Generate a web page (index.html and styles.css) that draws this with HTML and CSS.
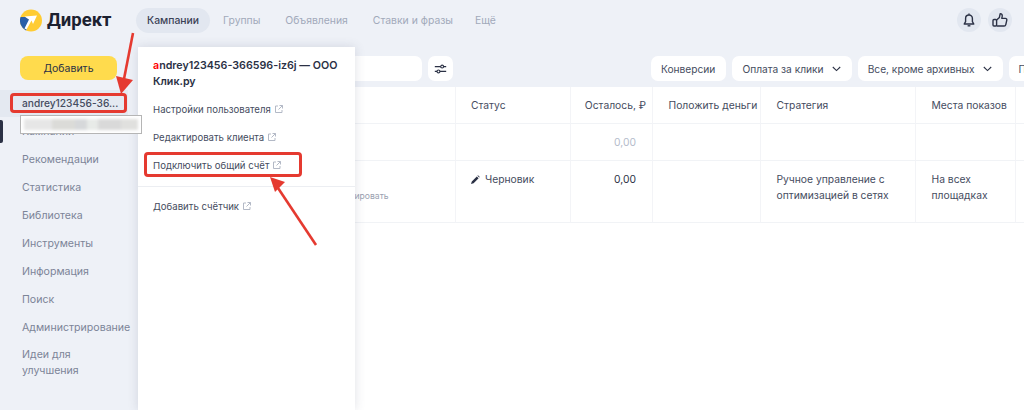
FILE: index.html
```html
<!DOCTYPE html>
<html lang="ru">
<head>
    <meta charset="UTF-8">
    <meta name="viewport" content="width=device-width, initial-scale=1.0">
    <title>Директ</title>
    <link rel="stylesheet" href="styles.css">
</head>
<body>
<div class="topbar">
    <div class="logo">
        <svg class="logo-icon" width="22" height="23" viewBox="0 0 22 23">
            <circle cx="11" cy="11.5" r="11" fill="#fc3"/>
            <path d="M.6 8H6l4 3-4 10.5A11 11 0 0 1 .6 8Z" fill="#2a5fa8"/>
            <path d="M4.5 7.5 17 6.5 13 15 11.5 11.5 6.5 20.5 4.5 19.5 9 10.5Z" fill="#fff"/>
        </svg>
        <span class="logo-text">Директ</span>
    </div>
    <nav class="tabs">
        <a class="tab tab-active">Кампании</a>
        <a class="tab tab-groups">Группы</a>
        <a class="tab tab-ads">Объявления</a>
        <a class="tab tab-bids">Ставки и фразы</a>
        <a class="tab tab-more">Ещё</a>
    </nav>
    <div class="top-actions">
        <button class="round-btn">
            <svg width="14" height="14" viewBox="0 0 14 14" fill="none" stroke="#2b3145" stroke-width="1.4">
                <path d="M2.2 11h9.6L10.4 8.6V5.4a3.4 3.4 0 0 0-6.8 0v3.2Z" stroke-linejoin="round"/>
                <path d="M5.6 12.8h2.8"/>
                <path d="M7 .6v1.2"/>
            </svg>
        </button>
        <button class="round-btn">
            <svg width="16" height="16" viewBox="0 0 16 16" fill="none" stroke="#2b3145" stroke-width="1.4" stroke-linejoin="round">
                <rect x="1" y="7.5" width="3.6" height="6.5" rx="1"/>
                <path d="M4.6 8 7.4 5.4 8.2 1.6c1.6 0 2.2 1.2 2 2.6L9.8 6.4h3.6c1 0 1.6.8 1.4 1.7l-1 4.5c-.2.9-.9 1.4-1.7 1.4H4.6"/>
            </svg>
        </button>
    </div>
</div>

<div class="layout">
    <aside class="sidebar">
        <button class="add-btn">Добавить</button>
        <div class="account-row">andrey123456-36...</div>
        <a class="side-link side-link-active">Кампании</a>
        <a class="side-link">Рекомендации</a>
        <a class="side-link">Статистика</a>
        <a class="side-link">Библиотека</a>
        <a class="side-link">Инструменты</a>
        <a class="side-link">Информация</a>
        <a class="side-link">Поиск</a>
        <a class="side-link">Администрирование</a>
        <a class="side-link side-link-wrap">Идеи для улучшения</a>
    </aside>

    <main class="main-content">
        <div class="toolbar">
            <div class="search-box"></div>
            <button class="filter-btn">
                <svg width="13" height="10" viewBox="0 0 16 12" fill="none" stroke="#2b3145" stroke-width="1.4">
                    <path d="M1 3h14M1 9h14"/>
                    <circle cx="10" cy="3" r="1.8" fill="#fff"/>
                    <circle cx="5.5" cy="9" r="1.8" fill="#fff"/>
                </svg>
            </button>
            <button class="pill pill-first">Конверсии</button>
            <button class="pill">Оплата за клики <svg class="chevron" width="9" height="6" viewBox="0 0 9 6" fill="none" stroke="#2b3145" stroke-width="1.1"><path d="M.8 1 4.5 4.6 8.2 1"/></svg></button>
            <button class="pill">Все, кроме архивных <svg class="chevron" width="9" height="6" viewBox="0 0 9 6" fill="none" stroke="#2b3145" stroke-width="1.1"><path d="M.8 1 4.5 4.6 8.2 1"/></svg></button>
            <button class="pill">Показать</button>
        </div>

        <div class="campaign-table">
            <div class="cell head"></div>
            <div class="cell head status-cell">Статус</div>
            <div class="cell head head-num">Осталось, ₽</div>
            <div class="cell head head-clip">Положить деньги</div>
            <div class="cell head">Стратегия</div>
            <div class="cell head">Места показов</div>
            <div class="cell head"></div>

            <div class="cell"></div>
            <div class="cell"></div>
            <div class="cell num muted">0,00</div>
            <div class="cell"></div>
            <div class="cell"></div>
            <div class="cell"></div>
            <div class="cell"></div>

            <div class="cell tall name-cell"><span class="edit-link">Редактировать</span></div>
            <div class="cell tall status-cell">
                <span class="status">
                    <svg width="9" height="9" viewBox="0 0 9 9"><path d="M0 9 .8 6.4 5.8 1.4 7.6 3.2 2.6 8.2ZM6.4.8 7 .2 8.8 2 8.2 2.6Z" fill="#2b3145"/></svg>
                    Черновик
                </span>
            </div>
            <div class="cell tall num dark">0,00</div>
            <div class="cell tall"></div>
            <div class="cell tall">Ручное управление с оптимизацией в сетях</div>
            <div class="cell tall">На всех площадках</div>
            <div class="cell tall"></div>
        </div>
    </main>
</div>

<!-- Popup menu over the sidebar -->
<div class="account-menu">
    <div class="menu-title"><span class="first-letter">a</span>ndrey123456-366596-iz6j — ООО Клик.ру</div>
    <a class="menu-item">Настройки пользователя <svg class="ext" width="8" height="8" viewBox="0 0 8 8" fill="none" stroke="#b3b9c6"><path d="M3 1H.5v6.5H7V5M4.5.5h3v3M7.5.5 3.5 4.5"/></svg></a>
    <a class="menu-item">Редактировать клиента <svg class="ext" width="8" height="8" viewBox="0 0 8 8" fill="none" stroke="#b3b9c6"><path d="M3 1H.5v6.5H7V5M4.5.5h3v3M7.5.5 3.5 4.5"/></svg></a>
    <a class="menu-item">Подключить общий счёт <svg class="ext" width="8" height="8" viewBox="0 0 8 8" fill="none" stroke="#b3b9c6"><path d="M3 1H.5v6.5H7V5M4.5.5h3v3M7.5.5 3.5 4.5"/></svg></a>
    <div class="menu-divider"></div>
    <a class="menu-item">Добавить счётчик <svg class="ext" width="8" height="8" viewBox="0 0 8 8" fill="none" stroke="#b3b9c6"><path d="M3 1H.5v6.5H7V5M4.5.5h3v3M7.5.5 3.5 4.5"/></svg></a>
</div>

<!-- Hidden login label -->
<div class="login-tooltip"><div class="login-blur"></div></div>

<!-- Red annotations drawn on the screenshot -->
<div class="mark mark-account"></div>
<div class="mark mark-shared"></div>
<svg class="arrows" width="1024" height="410" viewBox="0 0 1024 410" fill="none">
    <path d="M133 33 123 84" stroke="#e53a30" stroke-width="2.6"/>
    <path d="M121 94 116 76 133 80Z" fill="#e53a30"/>
    <path d="M316 245 276 185" stroke="#e53a30" stroke-width="2.6"/>
    <path d="M270 177 285 182 275 192Z" fill="#e53a30"/>
</svg>
</body>
</html>
```

FILE: styles.css
```css
body {
    font-family: Inter, "Noto Sans", sans-serif;
    font-size: 10.3px;
    line-height: 16px;
    background-color: #eef1f7;
    color: #454c60;
    margin: 0;
    width: 1024px;
    height: 410px;
    overflow: hidden;
    position: relative;
}

button {
    font-family: inherit;
    font-size: inherit;
    color: inherit;
    border: none;
    cursor: pointer;
}

/* Top bar */
.topbar {
    display: flex;
    align-items: center;
    height: 40px;
}

.logo {
    display: flex;
    align-items: center;
    width: 136px;
    padding-left: 20px;
    box-sizing: border-box;
}

.logo-icon {
    flex-shrink: 0;
}

.logo-text {
    font-family: Roboto, sans-serif;
    font-size: 18.5px;
    font-weight: 700;
    line-height: 24px;
    color: #1c2130;
    margin-left: 5px;
}

.tabs {
    display: flex;
    align-items: center;
    font-size: 10.4px;
}

.tab {
    color: #a1a9ba;
    height: 25px;
    line-height: 25px;
    white-space: nowrap;
}

.tab-active {
    color: #3b4256;
    font-weight: 500;
    background-color: #e2e7f0;
    border-radius: 13px;
    padding: 0 11px;
}

.tab-groups {
    margin-left: 13px;
}

.tab-ads {
    margin-left: 25px;
}

.tab-bids {
    margin-left: 25px;
}

.tab-more {
    margin-left: 22px;
}

.top-actions {
    display: flex;
    gap: 7px;
    margin-left: auto;
    padding-right: 12px;
}

.round-btn {
    display: flex;
    align-items: center;
    justify-content: center;
    width: 24px;
    height: 24px;
    padding: 0;
    border-radius: 50%;
    background-color: #e2e7f0;
}

/* Layout */
.layout {
    display: flex;
    height: 370px;
}

/* Side Panel */
.sidebar {
    width: 138px;
    flex-shrink: 0;
    display: flex;
    flex-direction: column;
    padding-top: 16px;
    box-sizing: border-box;
}

.add-btn {
    width: 97px;
    height: 24px;
    margin-left: 20px;
    padding: 0;
    font-size: 10.5px;
    background-color: #ffdb4d;
    border-radius: 8px;
    color: #2b3145;
}

.account-row {
    width: 128px;
    height: 27px;
    line-height: 27px;
    margin-top: 10px;
    padding-left: 22px;
    box-sizing: border-box;
    font-size: 10.2px;
    font-weight: 500;
    background-color: #e4e9f1;
    white-space: nowrap;
}

.side-link {
    position: relative;
    display: block;
    height: 28px;
    line-height: 28px;
    padding-left: 22px;
    font-size: 10.6px;
    color: #7c8497;
    white-space: nowrap;
}

.side-link-active {
    margin-top: 1px;
}

.side-link-active::before {
    content: "";
    position: absolute;
    left: 0;
    top: 2px;
    width: 3px;
    height: 23px;
    background-color: #2b3145;
    border-radius: 0 2px 2px 0;
}

.side-link-wrap {
    height: auto;
    line-height: 16px;
    margin-top: 5px;
    width: 76px;
    white-space: normal;
}

/* Main Content */
.main-content {
    flex: 1;
    min-width: 0;
    overflow: hidden;
}

.toolbar {
    display: flex;
    margin-top: 16px;
    height: 25px;
}

.search-box {
    width: 284px;
    flex-shrink: 0;
    background-color: #fff;
    border-radius: 7px;
}

.filter-btn {
    width: 25px;
    height: 25px;
    flex-shrink: 0;
    margin-left: 6px;
    padding: 0;
    display: flex;
    align-items: center;
    justify-content: center;
    background-color: #fff;
    border-radius: 7px;
}

.pill {
    display: flex;
    align-items: center;
    flex-shrink: 0;
    height: 25px;
    margin-left: 6px;
    padding: 0 11px 0 10px;
    font-size: 10.2px;
    background-color: #fff;
    border-radius: 7px;
    white-space: nowrap;
}

.pill-first {
    margin-left: 198px;
}

.chevron {
    margin-left: 8px;
}

.campaign-table {
    display: grid;
    grid-template-columns: 318px 115px 82px 108px 155px 100px 8px;
    grid-template-rows: 37px 37px 62px;
    margin-top: 6px;
    background-color: #fff;
    height: 323px;
    align-content: start;
}

.cell {
    padding: 10px 8px 0 15.5px;
    border-right: 1px solid #f3f4f7;
    border-bottom: 1px solid #f1f3f6;
    box-sizing: border-box;
    overflow: hidden;
}

.status-cell {
    padding-left: 15px;
}

.head {
    white-space: nowrap;
}

.head-num {
    text-align: right;
    padding-right: 6px;
    padding-left: 0;
}

.head-clip {
    padding-right: 0;
}

.num {
    text-align: right;
    padding-right: 16px;
}

.muted {
    color: #b4bccb;
}

.dark {
    color: #2b3145;
}

.status {
    display: flex;
    align-items: center;
    gap: 5px;
}

.name-cell {
    padding: 26px 0 0 187px;
    white-space: nowrap;
}

.edit-link {
    font-size: 8.6px;
    color: #9aa1b0;
}

/* Account popup */
.account-menu {
    position: absolute;
    left: 138px;
    top: 47px;
    bottom: 0;
    width: 217px;
    padding: 11px 15px 0;
    box-sizing: border-box;
    background-color: #fff;
    box-shadow: 0 0 10px rgba(60, 70, 100, 0.16);
}

.menu-title {
    font-size: 10.7px;
    font-weight: 600;
    color: #2b3145;
    margin-bottom: 6px;
}

.first-letter {
    color: #f00;
}

.menu-item {
    display: flex;
    align-items: center;
    gap: 4px;
    height: 28px;
    font-size: 9.6px;
    white-space: nowrap;
}

.ext {
    margin-top: -3px;
}

.menu-divider {
    height: 1px;
    margin: 6px -15px;
    background-color: #eceef2;
}

/* Blurred login */
.login-tooltip {
    position: absolute;
    left: 20px;
    top: 115px;
    width: 122px;
    height: 19px;
    padding: 3px;
    box-sizing: border-box;
    background-color: #fff;
    border: 1px solid #b5b5b5;
}

.login-blur {
    height: 100%;
    background: linear-gradient(90deg, #e6e6e6 0 25%, #dbdbd8 25% 45%, #d6d8da 45% 55%, #e8ebe8 55% 65%, #d9d9d9 65% 85%, #e0e0de 85% 100%);
    filter: blur(1.5px);
}

/* Red annotations */
.mark {
    position: absolute;
    border: 3px solid #e53a30;
    border-radius: 4px;
    box-sizing: border-box;
}

.mark-account {
    left: 10px;
    top: 93px;
    width: 117px;
    height: 20px;
}

.mark-shared {
    left: 144px;
    top: 152px;
    width: 158px;
    height: 25px;
}

.arrows {
    position: absolute;
    left: 0;
    top: 0;
    pointer-events: none;
}
```
